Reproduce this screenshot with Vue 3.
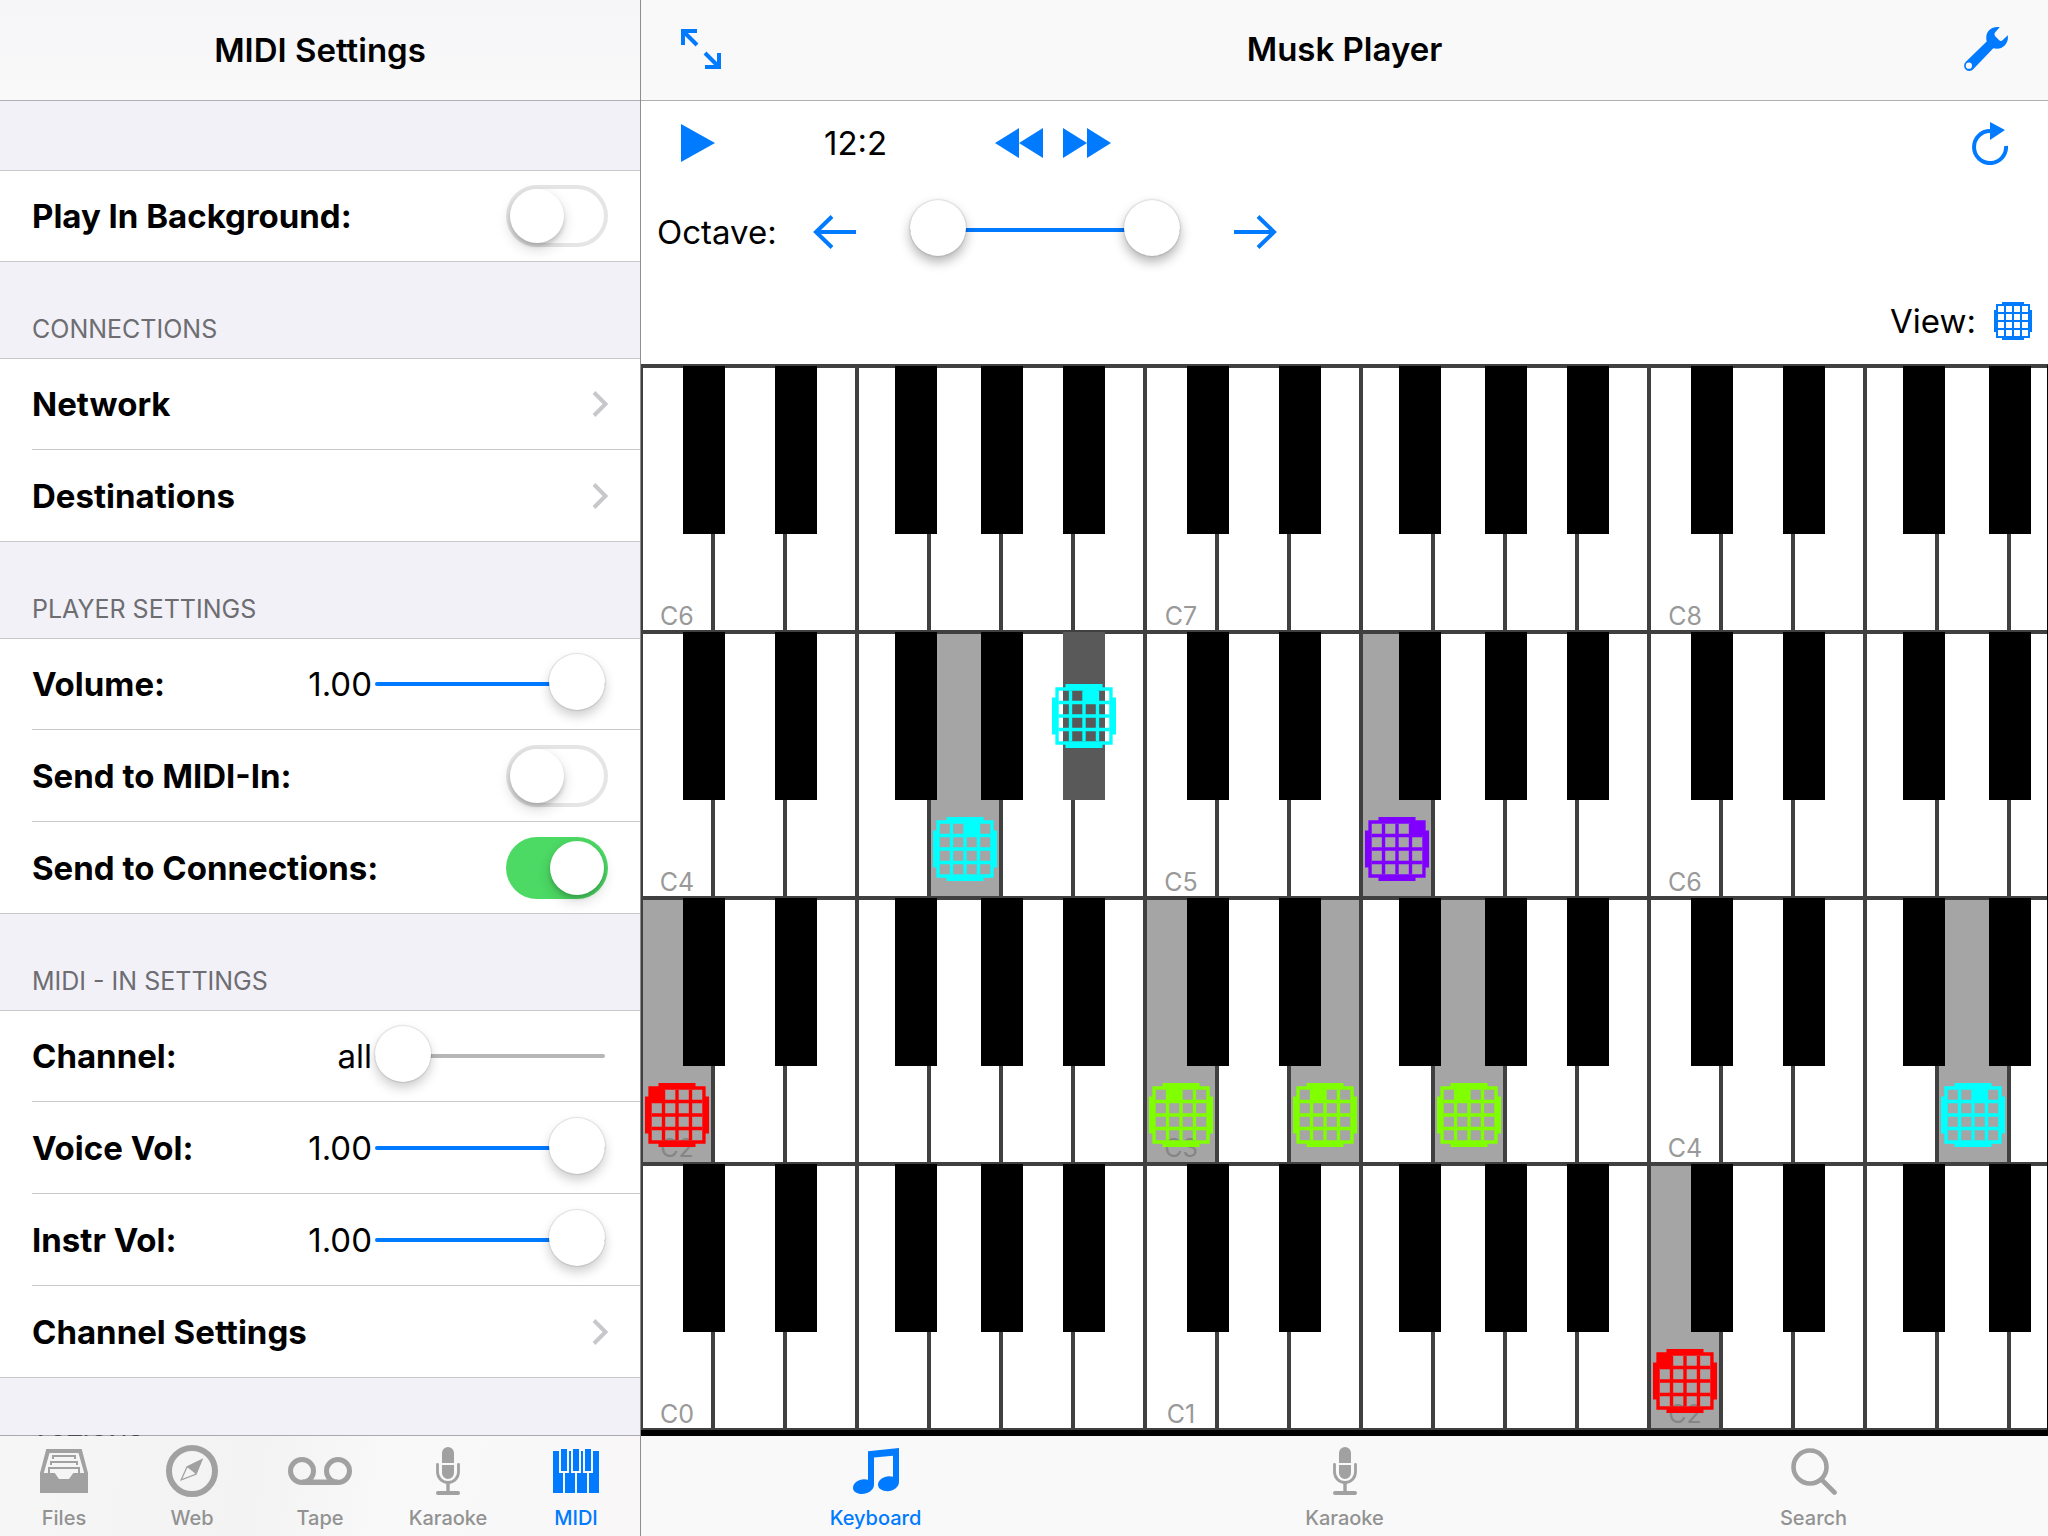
<template>
    <div class="split-view">
        <svg class="icon-defs" aria-hidden="true">
            <symbol id="icon-files" viewBox="0 0 48 44">
                <path fill-rule="evenodd" d="M6.3 0H41.7L48 24V44H0V24ZM9.5 4L3.8 24H14.7L19 30H29L33.3 24H44.2L38.5 4Z" />
                <path d="M12 6H36V10H34V8H14V10H12ZM10 12H38V16H36V14H12V16H10ZM8 18H40V25H38V20H10V25H8Z" />
            </symbol>
            <symbol id="icon-web" viewBox="0 0 52 52">
                <circle cx="26" cy="26" r="23" fill="none" stroke="currentColor" stroke-width="6" />
                <path d="M36.5 14L20.4 21.7L25.5 25.5L30.3 29.6Z" />
                <path d="M36 14.6L21 22L15.2 34.8L29.8 29.3Z" fill="none" stroke="currentColor" stroke-width="1.3" />
            </symbol>
            <symbol id="icon-tape" viewBox="0 0 64 28">
                <g fill="none" stroke="currentColor" stroke-width="5">
                    <circle cx="14" cy="14" r="11.5" />
                    <circle cx="50" cy="14" r="11.5" />
                </g>
                <path d="M14 22.5H50V28H14Z" />
            </symbol>
            <symbol id="icon-mic" viewBox="0 0 24 48">
                <path d="M6 16V6A6 6 0 0 1 18 6V16ZM6 18H18V26A6 6 0 0 1 6 26Z" />
                <path d="M1.5 17.5V25A10.5 10.5 0 0 0 22.5 25V17.5" fill="none" stroke="currentColor" stroke-width="2.8" stroke-linecap="round" />
                <path d="M10.3 36H13.7V44H10.3Z" />
                <rect x="0" y="44" width="24" height="4" rx="2" />
            </symbol>
            <symbol id="icon-midi" viewBox="0 0 46 44">
                <path d="M0 2H6V24H10V44H0ZM16 2H18V24H22V44H12V24H16ZM28 2H30V24H34V44H24V24H28ZM40 2H46V44H36V24H40Z" />
                <path d="M8 0H14V22H8ZM20 0H26V22H20ZM32 0H38V22H32Z" />
            </symbol>
            <symbol id="icon-note" viewBox="0 0 46 46">
                <path fill-rule="evenodd" d="M15 3.3L46 0V34C46 39 40.5 43.2 34.5 43.2C29 43.2 25 40.5 25 36.8C25 32 30.5 28.2 36 28.2C37.6 28.2 39 28.5 40 28.8V7.8L21 9.6V37C21 42 14.5 46 9 46C4 46 0 43.6 0 40C0 35.2 5.5 31.3 11 31.3C12.6 31.3 14 31.5 15 31.8Z" />
            </symbol>
            <symbol id="icon-search" viewBox="0 0 46 47">
                <circle cx="19" cy="19" r="16.5" fill="none" stroke="currentColor" stroke-width="4.6" />
                <path d="M31 32L43.5 44.5" fill="none" stroke="currentColor" stroke-width="4.6" stroke-linecap="round" />
            </symbol>
            <symbol id="icon-grid" viewBox="0 0 38 38">
                <path fill-rule="evenodd" d="M8 0H30V2H36V8H38V30H36V36H30V38H8V36H2V30H0V8H2V2H8ZM4 4V34H34V4Z" />
                <path d="M10 4H12V34H10ZM18 4H20V34H18ZM26 4H28V34H26ZM4 10H34V12H4ZM4 18H34V20H4ZM4 26H34V28H4Z" />
            </symbol>
        </svg>

        <aside class="sidebar">
            <header class="nav-bar sidebar-nav">
                <h1>MIDI Settings</h1>
            </header>

            <div class="settings">
                <section v-for="section in sections" :key="section.title" class="section">
                    <h2>{{ section.title }}</h2>
                    <ul v-if="section.rows.length">
                        <li v-for="row in section.rows" :key="row.id">
                            <a v-if="row.type === 'link'" href="#" class="row-link">
                                {{ row.label }}
                                <svg class="chevron" viewBox="0 0 16 26" aria-hidden="true">
                                    <path d="M2 1.5L13.5 13L2 24.5" />
                                </svg>
                            </a>
                            <template v-else-if="row.type === 'switch'">
                                <label :for="row.id">{{ row.label }}</label>
                                <input :id="row.id" v-model="row.value" type="checkbox" class="switch">
                            </template>
                            <template v-else>
                                <label :for="row.id">{{ row.label }}</label>
                                <output :for="row.id">{{ formatValue(row) }}</output>
                                <input
                                    :id="row.id"
                                    v-model.number="row.value"
                                    type="range"
                                    min="0"
                                    :max="row.max"
                                    step="0.01"
                                    class="slider"
                                    :style="{ '--fill': row.value / row.max * 100 + '%' }"
                                >
                            </template>
                        </li>
                    </ul>
                </section>
            </div>

            <nav class="tab-bar sidebar-tabs">
                <a v-for="tab in sidebarTabs" :key="tab.label" href="#" :class="['tab', { active: tab.active }]">
                    <span class="tab-icon">
                        <svg :width="tab.width" :height="tab.height"><use :href="'#icon-' + tab.icon" /></svg>
                    </span>
                    <span class="tab-label">{{ tab.label }}</span>
                </a>
            </nav>
        </aside>

        <main class="player">
            <header class="nav-bar player-nav">
                <button type="button" aria-label="Full screen">
                    <svg width="40" height="40" viewBox="0 0 40 40">
                        <path class="line" d="M2 16V2H16M2 2L16 16M38 24V38H24M38 38L24 24" />
                    </svg>
                </button>
                <h1>Musk Player</h1>
                <button type="button" class="nav-right" aria-label="Tools">
                    <svg width="44" height="44" viewBox="0 0 44 44">
                        <path fill-rule="evenodd" d="M22.7 14.5C20.5 5 27 -1 35.7 .3L31 5.5C30 7.2 30.5 8.5 31.5 9.5L35 13C36.2 14.2 37.5 14.2 38.5 13.2L43.8 8.2C45 17 38 23.5 29.3 21.2L9.2 42.3A5.3 5.3 0 0 1 1.6 34.9ZM8 38.7A3.1 3.1 0 1 0 1.8 38.7A3.1 3.1 0 1 0 8 38.7Z" />
                    </svg>
                </button>
            </header>

            <div class="controls">
                <div class="control-row transport">
                    <button type="button" aria-label="Play">
                        <svg width="34" height="38" viewBox="0 0 34 38"><path d="M0 0L34 19L0 38Z" /></svg>
                    </button>
                    <span class="time">12:2</span>
                    <button type="button" aria-label="Rewind">
                        <svg width="48" height="30" viewBox="0 0 48 30"><path d="M24 0V30L0 15ZM48 0V30L24 15Z" /></svg>
                    </button>
                    <button type="button" class="forward" aria-label="Forward">
                        <svg width="48" height="30" viewBox="0 0 48 30"><path d="M0 0L24 15L0 30ZM24 0L48 15L24 30Z" /></svg>
                    </button>
                    <button type="button" class="repeat" aria-label="Repeat">
                        <svg width="36" height="43" viewBox="0 0 36 43">
                            <path class="line" d="M19 9.1H18A16 16 0 1 0 34 24" />
                            <path d="M18 0L33 8L18 18Z" />
                        </svg>
                    </button>
                </div>

                <div class="control-row octave">
                    <label for="octave-low" class="octave-label">Octave:</label>
                    <button type="button" aria-label="Octave down">
                        <svg width="43" height="34" viewBox="0 0 43 34"><path class="line" d="M19 1.5L3 17L19 32.5M3 17H43" /></svg>
                    </button>
                    <div class="range">
                        <input id="octave-low" v-model.number="octaveLow" type="range" min="0" max="8" class="slider">
                        <input v-model.number="octaveHigh" type="range" min="0" max="8" class="slider" aria-label="Highest octave">
                    </div>
                    <button type="button" aria-label="Octave up">
                        <svg width="43" height="34" viewBox="0 0 43 34"><path class="line" d="M24 1.5L40 17L24 32.5M40 17H0" /></svg>
                    </button>
                </div>

                <div class="control-row view">
                    <span id="view-label">View:</span>
                    <button type="button" aria-labelledby="view-label">
                        <svg width="38" height="38"><use href="#icon-grid" /></svg>
                    </button>
                </div>
            </div>

            <div class="keyboard">
                <div v-for="first in [6, 4, 2, 0]" :key="first" class="manual">
                    <div v-for="octave in [first, first + 1, first + 2]" :key="octave" class="octave-keys">
                        <button
                            v-for="name in whiteKeys"
                            :key="name"
                            type="button"
                            :class="['white-key', { pressed: notes[name + octave] }]"
                            :aria-label="name + octave"
                        >
                            <span v-if="name === 'C'" class="key-label">C{{ octave }}</span>
                            <svg v-if="notes[name + octave]" :class="['marker', notes[name + octave].color]" viewBox="0 0 38 38">
                                <use href="#icon-grid" />
                                <rect :x="notes[name + octave].cell * 8 + 3" y="3" width="8" height="8" />
                            </svg>
                        </button>
                        <button
                            v-for="name in blackKeys"
                            :key="name"
                            type="button"
                            :class="['black-key', name.replace('#', '-sharp').toLowerCase(), { pressed: notes[name + octave] }]"
                            :aria-label="name + octave"
                        >
                            <svg v-if="notes[name + octave]" :class="['marker', notes[name + octave].color]" viewBox="0 0 38 38">
                                <use href="#icon-grid" />
                                <rect :x="notes[name + octave].cell * 8 + 3" y="3" width="8" height="8" />
                            </svg>
                        </button>
                    </div>
                </div>
            </div>

            <nav class="tab-bar">
                <a v-for="tab in playerTabs" :key="tab.label" href="#" :class="['tab', { active: tab.active }]">
                    <span class="tab-icon">
                        <svg :width="tab.width" :height="tab.height"><use :href="'#icon-' + tab.icon" /></svg>
                    </span>
                    <span class="tab-label">{{ tab.label }}</span>
                </a>
            </nav>
        </main>
    </div>
</template>

<script setup>
import { reactive, ref } from 'vue'

const sections = reactive([
    {
        title: '',
        rows: [
            { id: 'background', type: 'switch', label: 'Play In Background:', value: false }
        ]
    },
    {
        title: 'Connections',
        rows: [
            { id: 'network', type: 'link', label: 'Network' },
            { id: 'destinations', type: 'link', label: 'Destinations' }
        ]
    },
    {
        title: 'Player Settings',
        rows: [
            { id: 'volume', type: 'slider', label: 'Volume:', value: 1, max: 1 },
            { id: 'midi-in', type: 'switch', label: 'Send to MIDI-In:', value: false },
            { id: 'connections', type: 'switch', label: 'Send to Connections:', value: true }
        ]
    },
    {
        title: 'MIDI - In Settings',
        rows: [
            { id: 'channel', type: 'slider', label: 'Channel:', value: 0, max: 16 },
            { id: 'voice', type: 'slider', label: 'Voice Vol:', value: 1, max: 1 },
            { id: 'instr', type: 'slider', label: 'Instr Vol:', value: 1, max: 1 },
            { id: 'channel-settings', type: 'link', label: 'Channel Settings' }
        ]
    },
    { title: 'Actions', rows: [] }
])

const sidebarTabs = [
    { label: 'Files', icon: 'files', width: 48, height: 44 },
    { label: 'Web', icon: 'web', width: 52, height: 52 },
    { label: 'Tape', icon: 'tape', width: 64, height: 28 },
    { label: 'Karaoke', icon: 'mic', width: 24, height: 48 },
    { label: 'MIDI', icon: 'midi', width: 46, height: 44, active: true }
]

const playerTabs = [
    { label: 'Keyboard', icon: 'note', width: 46, height: 46, active: true },
    { label: 'Karaoke', icon: 'mic', width: 24, height: 48 },
    { label: 'Search', icon: 'search', width: 46, height: 47 }
]

const whiteKeys = ['C', 'D', 'E', 'F', 'G', 'A', 'B']
const blackKeys = ['C#', 'D#', 'F#', 'G#', 'A#']

const octaveLow = ref(0)
const octaveHigh = ref(8)

// notes currently sounding, cell is the filled square of the top row
const notes = {
    'C2': { color: 'red', cell: 0 },
    'C3': { color: 'green', cell: 1 },
    'E3': { color: 'green', cell: 1 },
    'G3': { color: 'green', cell: 1 },
    'G4': { color: 'cyan', cell: 2 },
    'A#4': { color: 'cyan', cell: 2 },
    'F5': { color: 'purple', cell: 3 }
}

function formatValue(row) {
    if (row.id === 'channel') return row.value < 1 ? 'all' : Math.floor(row.value)
    return row.value.toFixed(2)
}
</script>

<style>
body {
    margin: 0;
}
</style>

<style scoped>
.split-view {
    display: grid;
    grid-template-columns: 640px minmax(0, 1fr);
    height: 100vh;
    overflow: hidden;
    font-family: Inter, "Liberation Sans", sans-serif;
    font-size: 33px;
    line-height: 40px;
    color: #000;
    background: #fff;
}

.icon-defs {
    position: absolute;
    width: 0;
    height: 0;
}

svg {
    display: block;
    fill: currentColor;
}

svg .line {
    fill: none;
    stroke: currentColor;
    stroke-width: 4;
}

button {
    padding: 0;
    border: none;
    background: none;
    font: inherit;
    color: #007aff;
    cursor: pointer;
}

a {
    color: inherit;
    text-decoration: none;
}

/* bars */
.nav-bar {
    box-sizing: border-box;
    flex: none;
    display: grid;
    align-items: center;
    height: 101px;
    border-bottom: 1px solid #b0b0b2;
    background: #f9f9f9;
}

.nav-bar h1 {
    margin: 0;
    font-size: 33px;
    font-weight: 600;
    text-align: center;
}

.sidebar-nav {
    background: linear-gradient(#f6f6f9, #f9f9f9);
}

.player-nav {
    grid-template-columns: 1fr auto 1fr;
    padding: 0 40px 2px;
}

.nav-right {
    justify-self: end;
}

.tab-bar {
    flex: none;
    display: flex;
    height: 100px;
    background: #f9f9f9;
}

.sidebar-tabs {
    position: relative;
    margin-top: -1px;
    border-top: 1px solid rgba(0, 0, 0, 0.3);
    background: linear-gradient(100deg, #f6f6f6, #f3f3f3 40%, #f9f9f9 60%, #f9f7f7);
    background-clip: padding-box;
}

.tab {
    flex: 1;
    display: flex;
    flex-direction: column;
    align-items: center;
    gap: 9px;
    padding-top: 9px;
    color: #a1a1a1;
}

.tab-icon {
    display: flex;
    align-items: center;
    height: 52px;
}

.tab-label {
    font-size: 20px;
    line-height: 24px;
    font-weight: 500;
    color: #929292;
}

.tab.active,
.tab.active .tab-label {
    color: #007aff;
}

/* sidebar */
.sidebar {
    display: flex;
    flex-direction: column;
    min-height: 0;
}

.settings {
    flex: 1;
    min-height: 0;
    overflow: hidden;
    background: #f2f1f7;
}

.section h2 {
    box-sizing: border-box;
    height: 96px;
    margin: 0;
    padding: 52px 32px 0;
    font-size: 25px;
    line-height: 30px;
    font-weight: 400;
    color: #6d6d72;
    text-transform: uppercase;
}

.section:first-child h2 {
    height: 69px;
}

.section ul {
    margin: 0;
    padding: 0 0 0 32px;
    list-style: none;
    border-top: 1px solid #c8c7cc;
    border-bottom: 1px solid #c8c7cc;
    background: #fff;
}

.section li {
    box-sizing: border-box;
    display: flex;
    align-items: center;
    height: 90px;
    padding-right: 32px;
    font-weight: 700;
}

.section li + li {
    height: 92px;
    border-top: 1px solid #c8c7cc;
}

.section label {
    flex: 1;
}

.section output {
    margin-right: 3px;
    font-weight: 400;
}

.row-link {
    flex: 1;
    display: flex;
    align-items: center;
    justify-content: space-between;
}

.chevron {
    width: 16px;
    height: 26px;
    fill: none;
    stroke: #c7c7cc;
    stroke-width: 4;
}

.switch {
    appearance: none;
    box-sizing: border-box;
    width: 102px;
    height: 62px;
    margin: 0;
    padding: 4px;
    border-radius: 31px;
    background: #fff;
    box-shadow: inset 0 0 0 4px #e5e5e5;
}

.switch::before {
    content: "";
    display: block;
    width: 54px;
    height: 54px;
    border-radius: 50%;
    background: #fff;
    box-shadow: 0 6px 14px rgba(0, 0, 0, 0.16), 0 3px 4px rgba(0, 0, 0, 0.16);
}

.switch:checked {
    background: #4cd964;
    box-shadow: none;
}

.switch:checked::before {
    margin-left: 40px;
}

.slider {
    appearance: none;
    width: 230px;
    height: 56px;
    margin: 0 3px 0 0;
    background: none;
}

.slider::-webkit-slider-runnable-track {
    height: 4px;
    border-radius: 2px;
    background: linear-gradient(to right, #007aff var(--fill), #b6b6b6 var(--fill));
}

.slider::-webkit-slider-thumb {
    appearance: none;
    width: 56px;
    height: 56px;
    margin-top: -28px;
    border-radius: 50%;
    background: #fff;
    box-shadow: 0 0 1px 1px rgba(0, 0, 0, 0.1), 0 6px 12px rgba(0, 0, 0, 0.2);
}

/* player */
.player {
    display: flex;
    flex-direction: column;
    min-height: 0;
    border-left: 1px solid #8e8e92;
}

.control-row {
    display: flex;
    align-items: center;
    height: 86px;
}

.transport {
    height: 84px;
    padding: 0 40px;
}

.time {
    width: 171px;
    margin-left: 109px;
}

.forward {
    margin-left: 20px;
}

.repeat {
    margin-left: auto;
}

.octave {
    height: 93px;
    padding-left: 16px;
}

.octave-label {
    width: 156px;
}

.range {
    display: grid;
    margin: 0 54px 4px;
}

/* both thumbs share one track */
.range .slider {
    grid-area: 1 / 1;
    width: 270px;
    margin: 0;
    pointer-events: none;
}

.range .slider::-webkit-slider-runnable-track {
    background: #007aff;
}

.range .slider + .slider::-webkit-slider-runnable-track {
    background: none;
}

.range .slider::-webkit-slider-thumb {
    pointer-events: auto;
    box-shadow: 0 0 2px rgba(0, 0, 0, 0.3), 0 6px 12px rgba(0, 0, 0, 0.3);
}

.view {
    justify-content: flex-end;
    gap: 18px;
    padding-right: 16px;
}

/* keyboard */
.keyboard {
    flex: 1;
    display: flex;
    flex-direction: column;
    min-height: 0;
    padding-bottom: 6px;
    overflow: hidden;
    border-top: 2px solid #404040;
    border-right: 1px solid #000;
    background: #000;
}

.manual {
    flex: 1;
    display: flex;
    min-height: 0;
}

.octave-keys {
    position: relative;
    flex: none;
    display: flex;
}

.white-key {
    box-sizing: border-box;
    position: relative;
    display: flex;
    justify-content: center;
    align-items: flex-end;
    width: 72px;
    border: 2px solid #404040;
    background: #fff;
}

.white-key.pressed {
    background: #a5a5a5;
}

.key-label {
    font-size: 25px;
    line-height: 28px;
    color: #999;
}

.pressed .key-label {
    color: #858585;
}

.black-key {
    position: absolute;
    top: 0;
    display: flex;
    justify-content: center;
    align-items: center;
    width: 42px;
    height: 168px;
    background: #000;
}

.black-key.pressed {
    background: #595959;
}

.c-sharp {
    left: 42px;
}

.d-sharp {
    left: 134px;
}

.f-sharp {
    left: 254px;
}

.g-sharp {
    left: 340px;
}

.a-sharp {
    left: 422px;
}

.marker {
    flex: none;
    width: 64px;
    height: 64px;
}

.white-key .marker {
    position: absolute;
    left: 2px;
    bottom: 15px;
}

.red {
    color: #f00;
}

.green {
    color: #80ff00;
}

.cyan {
    color: #0ff;
}

.purple {
    color: #8000ff;
}
</style>
